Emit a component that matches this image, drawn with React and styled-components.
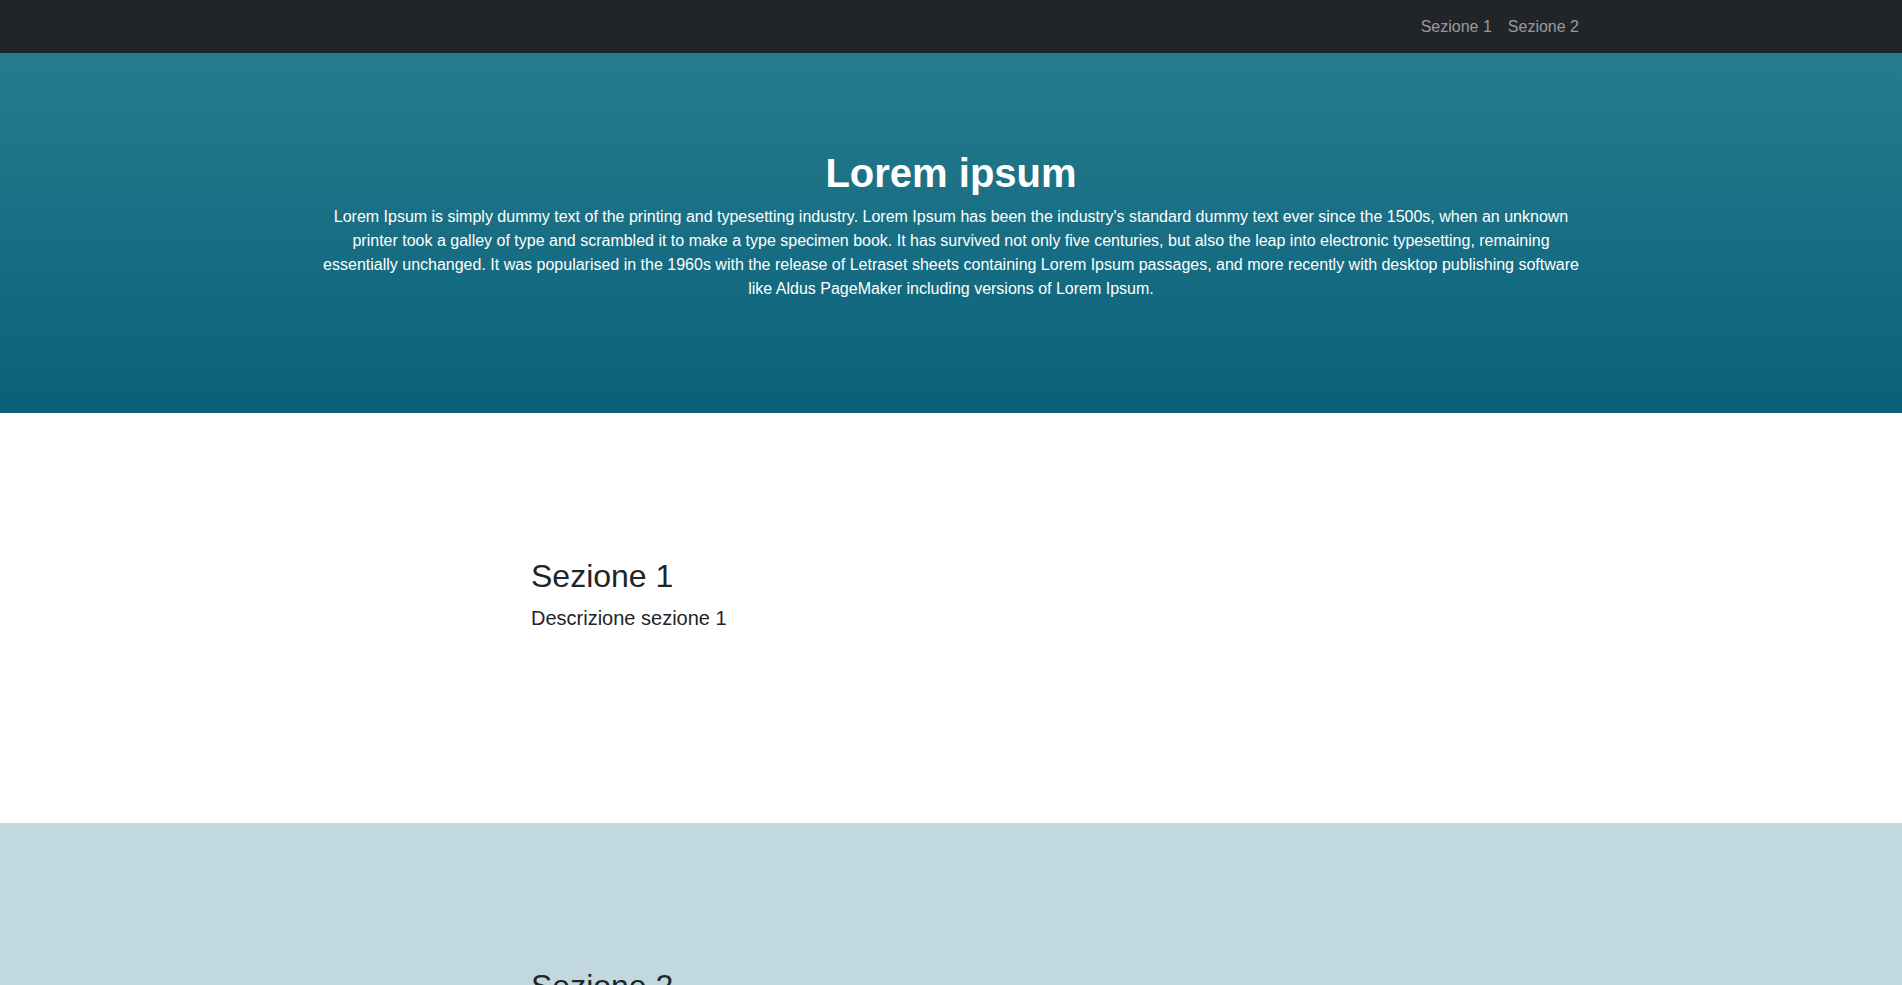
import React from "react";
import styled, { createGlobalStyle } from "styled-components";

const GlobalStyle = createGlobalStyle`
  * { box-sizing: border-box; }
  body {
    margin: 0;
    font-family: "Liberation Sans", Arial, sans-serif;
    color: #212529;
    background: #fff;
  }
`;

const Navbar = styled.nav`
  height: 53px;
  background-color: #212529;
  display: flex;
  align-items: center;
`;

const NavInner = styled.div`
  width: 100%;
  max-width: 1320px;
  margin: 0 auto;
  padding: 0 24px;
  display: flex;
  justify-content: flex-end;
`;

const NavLink = styled.a`
  padding: 0 8px;
  font-size: 16px;
  line-height: 24px;
  color: rgba(255, 255, 255, 0.55);
  text-decoration: none;
  cursor: pointer;
`;

const Hero = styled.header`
  height: 360px;
  background: linear-gradient(180deg, #287b8e 0%, #096179 100%);
  color: #fff;
  display: flex;
  align-items: center;
`;

const Container = styled.div`
  width: 100%;
  max-width: 1320px;
  margin: 0 auto;
  padding: 0 12px;
  text-align: ${(p) => (p.center ? "center" : "left")};
`;

const HeroTitle = styled.h1`
  margin: 0 0 8px;
  font-size: 40px;
  font-weight: 700;
  line-height: 1.2;
`;

const HeroText = styled.p`
  max-width: 1262px;
  margin: 0 auto 16px;
  font-size: 16px;
  line-height: 24px;
`;

const Section = styled.section`
  height: 410px;
  padding-top: 144px;
  background-color: ${(p) => p.bg || "#fff"};
`;

const Col = styled.div`
  width: 66.666%;
  margin-left: 16.666%;
  padding: 0 12px;
`;

const SectionTitle = styled.h2`
  margin: 0 0 8px;
  font-size: 32px;
  font-weight: 400;
  line-height: 1.2;
  color: #212529;
`;

const SectionText = styled.p`
  margin: 0 0 16px;
  font-size: 20px;
  line-height: 1.5;
  color: #212529;
`;

const sections = [
  { id: 1, title: "Sezione 1", text: "Descrizione sezione 1", bg: "#fff" },
  { id: 2, title: "Sezione 2", text: "Descrizione sezione 2", bg: "#c1d8de" },
];

export default function App() {
  return (
    <>
      <GlobalStyle />
      <Navbar>
        <NavInner>
          <NavLink href="#sezione1">Sezione 1</NavLink>
          <NavLink href="#sezione2">Sezione 2</NavLink>
        </NavInner>
      </Navbar>
      <Hero>
        <Container center>
          <HeroTitle>Lorem ipsum</HeroTitle>
          <HeroText>
            Lorem Ipsum is simply dummy text of the printing and typesetting industry. Lorem Ipsum has been the
            industry's standard dummy text ever since the 1500s, when an unknown printer took a galley of type and
            scrambled it to make a type specimen book. It has survived not only five centuries, but also the leap
            into electronic typesetting, remaining essentially unchanged. It was popularised in the 1960s with the
            release of Letraset sheets containing Lorem Ipsum passages, and more recently with desktop publishing
            software like Aldus PageMaker including versions of Lorem Ipsum.
          </HeroText>
        </Container>
      </Hero>
      {sections.map((s) => (
        <Section key={s.id} id={`sezione${s.id}`} bg={s.bg}>
          <Container>
            <Col>
              <SectionTitle>{s.title}</SectionTitle>
              <SectionText>{s.text}</SectionText>
            </Col>
          </Container>
        </Section>
      ))}
    </>
  );
}
